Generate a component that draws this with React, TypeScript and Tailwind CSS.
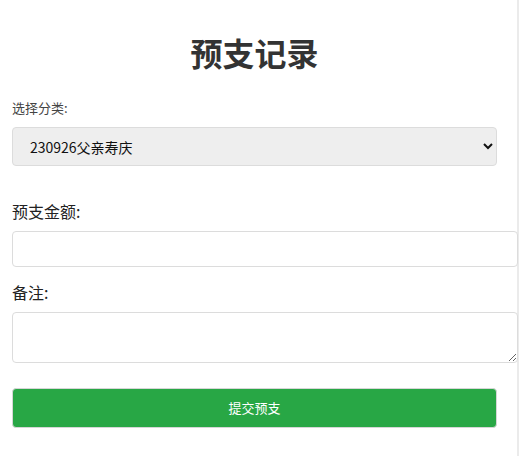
import React, { useState } from 'react';

export default function App() {
  const [category, setCategory] = useState('230926父亲寿庆');
  const [amount, setAmount] = useState('');
  const [note, setNote] = useState('');

  const font = { fontFamily: '"Noto Sans CJK SC", "Noto Sans", sans-serif' };

  return (
    <div className="w-[519px] h-[456px] bg-[#ebebeb]" style={font}>
      <div className="w-[517px] h-full bg-white pt-[36px] pl-[12px]">
        <h1 className="w-[485px] text-center text-[32px] leading-[32px] font-bold text-[#333]">预支记录</h1>

        <form className="w-[485px]" onSubmit={(e) => e.preventDefault()}>
          <label className="block mt-[33px] text-[13px] leading-[13px] text-[#444]">选择分类:</label>
          <select
            value={category}
            onChange={(e) => setCategory(e.target.value)}
            className="block mt-[13px] w-[485px] h-[39px] pl-[13px] pr-[8px] bg-[#eeeeee] border border-[#dcdcdc] rounded-[4px] text-[14px] text-[#111] outline-none"
          >
            <option>230926父亲寿庆</option>
          </select>

          <label className="block mt-[37px] text-[16px] leading-[16px] text-[#222]">预支金额:</label>
          <input
            type="number"
            value={amount}
            onChange={(e) => setAmount(e.target.value)}
            className="block mt-[12px] w-[506px] h-[36px] px-[10px] bg-white border border-[#dcdcdc] rounded-[4px] text-[14px] outline-none"
          />

          <label className="block mt-[17px] text-[16px] leading-[16px] text-[#222]">备注:</label>
          <textarea
            value={note}
            onChange={(e) => setNote(e.target.value)}
            className="block mt-[12px] w-[506px] h-[51px] px-[10px] py-[6px] bg-white border border-[#dcdcdc] rounded-[4px] text-[14px] outline-none"
          />

          <button
            type="submit"
            className="block mt-[25px] w-[485px] h-[40px] bg-[#28a745] border border-[#d6d6d6] rounded-[4px] text-white text-[13px]"
          >
            提交预支
          </button>
        </form>
      </div>
    </div>
  );
}
